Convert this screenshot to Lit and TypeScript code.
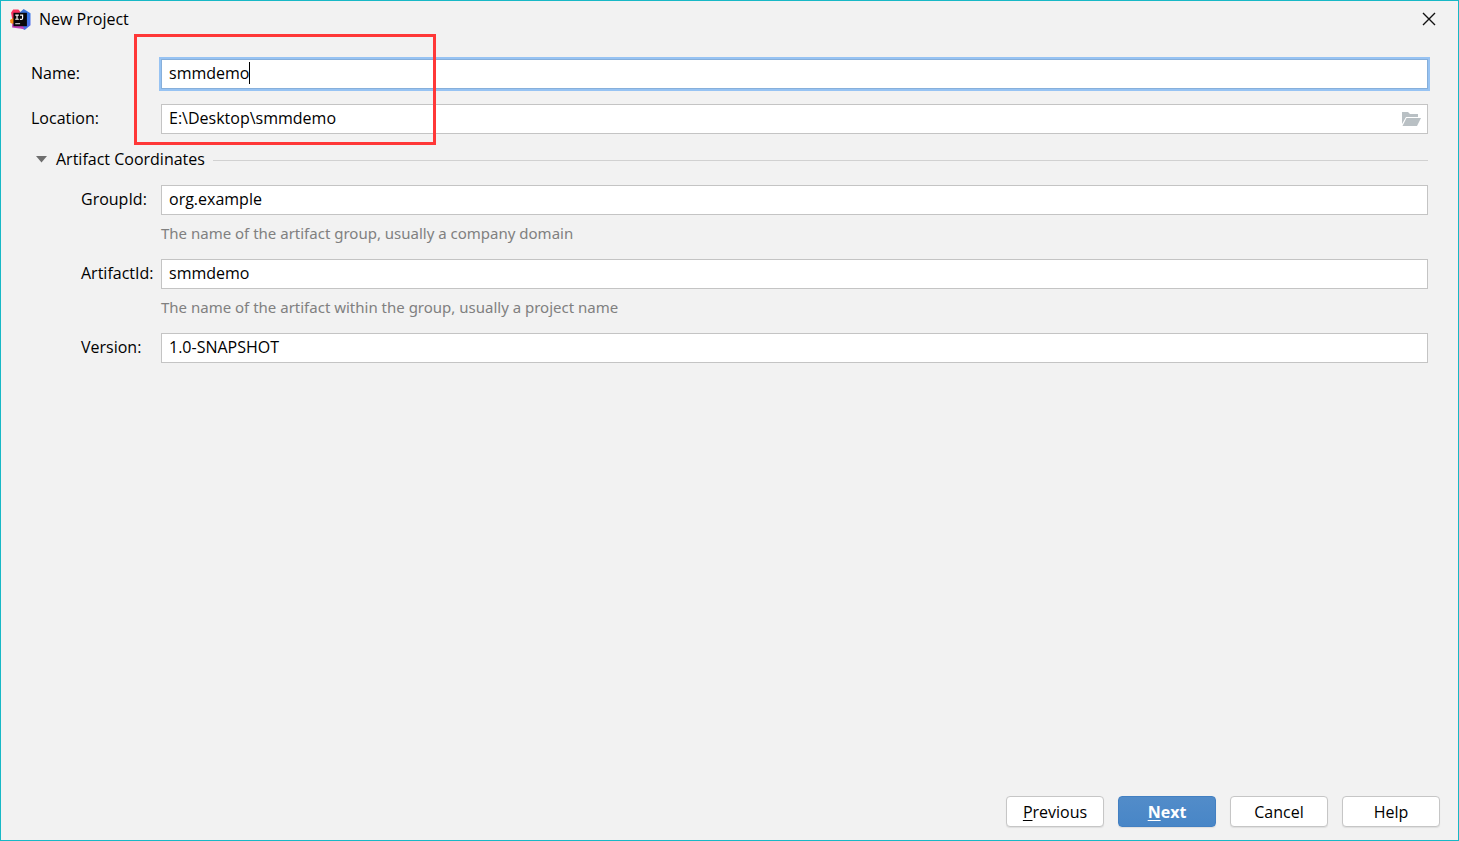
import { LitElement, html, css, svg } from "lit";
import { customElement, state } from "lit/decorators.js";

const logo = svg`
  <defs>
    <linearGradient id="warm" x1="0" y1="0" x2="0.3" y2="1">
      <stop offset="0" stop-color="#fe315d" />
      <stop offset="0.55" stop-color="#f0325f" />
      <stop offset="0.8" stop-color="#f97a12" />
    </linearGradient>
    <linearGradient id="cool" x1="0" y1="0" x2="1" y2="1">
      <stop offset="0" stop-color="#3f6fc8" />
      <stop offset="0.6" stop-color="#3a78e8" />
      <stop offset="1" stop-color="#5b67ee" />
    </linearGradient>
  </defs>
  <path d="M1 3.5 L3 0.5 L8 0.5 L11 4 L9 12 L5 15 L0.5 13 L2 9 Z" fill="url(#warm)" />
  <path d="M0 10.5 L4 8 L4 15 L0.5 13 Z" fill="#f98a15" />
  <path d="M8.5 4 L13 0 L19.5 4 L19.5 15.5 L14 20 L8 17 Z" fill="url(#cool)" />
  <path d="M2 14 L10 13 L14 19 L9 18.5 L2 17.5 Z" fill="#c03fb8" />
  <rect x="3.3" y="3.6" width="12.8" height="12.8" fill="#08070b" />
  <path d="M5 5.8 H8.4 M6.7 5.8 V9.8 M5 9.8 H8.4 M9.6 5.8 H12 V8.8 Q12 9.9 10.8 9.9 H9.4" fill="none" stroke="#fff" stroke-width="1.1" />
  <path d="M5 14 H9.6" stroke="#ddd" stroke-width="1" />
`;

@customElement("app-root")
export class AppRoot extends LitElement {
  @state() private expanded = true;

  static styles = css`
    :host {
      display: block;
      font-family: "Open Sans", "Noto Sans", sans-serif;
      font-size: 16px;
      line-height: 20px;
      color: #000;
    }
    * {
      box-sizing: border-box;
    }
    .window {
      min-height: 100vh;
      display: flex;
      flex-direction: column;
      background: #f2f2f2;
      border: 1px solid #17b8c6;
    }
    .titlebar {
      display: flex;
      align-items: center;
      gap: 8px;
      height: 36px;
      padding: 0 21px 0 9px;
    }
    .title {
      flex: 1;
      margin: 0;
      font-size: 16px;
      font-weight: 400;
    }
    svg {
      display: block;
    }
    button {
      font: inherit;
      color: inherit;
    }
    .close,
    .browse,
    .toggle {
      border: 0;
      padding: 0;
      background: none;
    }
    .form {
      flex: 1;
      padding: 22px 30px 0;
    }
    .main {
      position: relative;
      display: grid;
      gap: 15px;
    }
    .row {
      display: grid;
      grid-template-columns: 130px 1fr;
      align-items: center;
    }
    .nested .row {
      padding-left: 50px;
      grid-template-columns: 80px 1fr;
    }
    .field {
      position: relative;
      display: flex;
      align-items: center;
      height: 30px;
      background: #fff;
      border: 1px solid #c4c4c4;
    }
    .field.active {
      border-color: #87afda;
      box-shadow: 0 0 0 2px #97c3f3;
    }
    input {
      flex: 1;
      min-width: 0;
      height: 28px;
      padding: 0 7px 2px;
      border: 0;
      outline: 0;
      background: none;
      font: inherit;
      color: inherit;
    }
    label {
      padding-bottom: 2px;
    }
    .caret {
      position: absolute;
      left: 87px;
      top: 2px;
      width: 1px;
      height: 22px;
      background: #000;
    }
    .browse {
      margin-right: 6px;
    }
    .marker {
      position: absolute;
      left: 103px;
      top: -25px;
      width: 302px;
      height: 111px;
      border: 3px solid #ff3838;
      pointer-events: none;
    }
    .section {
      display: flex;
      align-items: center;
      gap: 8px;
      margin: 15px 0 14px;
    }
    .toggle {
      display: flex;
      align-items: center;
      gap: 9px;
      padding: 0 0 2px 5px;
    }
    .rule {
      flex: 1;
      height: 1px;
      background: #d1d1d1;
    }
    .hint {
      margin: 8px 0 16px 130px;
      font-family: "Noto Sans", "Open Sans", sans-serif;
      font-size: 15px;
      color: #808080;
    }
    .actions {
      display: flex;
      justify-content: flex-end;
      gap: 14px;
      padding: 0 18px 13px;
    }
    .action {
      width: 98px;
      height: 31px;
      padding: 0;
      border: 1px solid #c6c6c6;
      border-radius: 4px;
      background: #fff;
      box-shadow: 0 1px 1px #dedede;
    }
    .action.primary {
      border-color: #4380c2;
      background: linear-gradient(#528cc9, #4886c7);
      color: #fff;
      font-weight: 700;
    }
    .key {
      text-decoration: underline;
      text-underline-offset: 2px;
      text-decoration-thickness: 1px;
      text-decoration-skip-ink: none;
    }
  `;

  render() {
    return html`
      <div class="window">
        <header class="titlebar">
          <svg width="21" height="21" viewBox="0 0 20 20" aria-hidden="true">${logo}</svg>
          <h1 class="title">New Project</h1>
          <button class="close" aria-label="Close">
            <svg width="16" height="16" viewBox="0 0 16 16">
              <path d="M2 2 L14 14 M14 2 L2 14" stroke="#111" stroke-width="1.4" />
            </svg>
          </button>
        </header>

        <main class="form">
          <div class="main">
            <div class="row">
              <label for="name">Name:</label>
              <div class="field active">
                <input id="name" type="text" value="smmdemo" />
                <span class="caret"></span>
              </div>
            </div>
            <div class="row">
              <label for="location">Location:</label>
              <div class="field">
                <input id="location" type="text" value="E:\\Desktop\\smmdemo" />
                <button class="browse" aria-label="Browse">
                  <svg width="19" height="15" viewBox="0 0 19 15">
                    <path d="M0 0 H6 L8 2 H16 V5 H4 L0 12 Z" fill="#b9c0c4" />
                    <path d="M4.5 6 H19 L15 14 H0.5 Z" fill="#b9c0c4" />
                  </svg>
                </button>
              </div>
            </div>
            <div class="marker"></div>
          </div>

          <div class="section">
            <button
              class="toggle"
              aria-expanded=${this.expanded ? "true" : "false"}
              @click=${() => (this.expanded = !this.expanded)}
            >
              <svg width="11" height="7" viewBox="0 0 11 7" aria-hidden="true">
                <path d="M0 0 H11 L5.5 6.5 Z" fill="#6e6e6e" />
              </svg>
              Artifact Coordinates
            </button>
            <span class="rule"></span>
          </div>

          ${this.expanded
            ? html`<div class="nested">
                <div class="row">
                  <label for="group">GroupId:</label>
                  <div class="field"><input id="group" type="text" value="org.example" /></div>
                </div>
                <p class="hint">The name of the artifact group, usually a company domain</p>
                <div class="row">
                  <label for="artifact">ArtifactId:</label>
                  <div class="field"><input id="artifact" type="text" value="smmdemo" /></div>
                </div>
                <p class="hint">The name of the artifact within the group, usually a project name</p>
                <div class="row">
                  <label for="version">Version:</label>
                  <div class="field"><input id="version" type="text" value="1.0-SNAPSHOT" /></div>
                </div>
              </div>`
            : null}
        </main>

        <footer class="actions">
          <button class="action"><span class="key">P</span>revious</button>
          <button class="action primary"><span class="key">N</span>ext</button>
          <button class="action">Cancel</button>
          <button class="action">Help</button>
        </footer>
      </div>
    `;
  }
}
